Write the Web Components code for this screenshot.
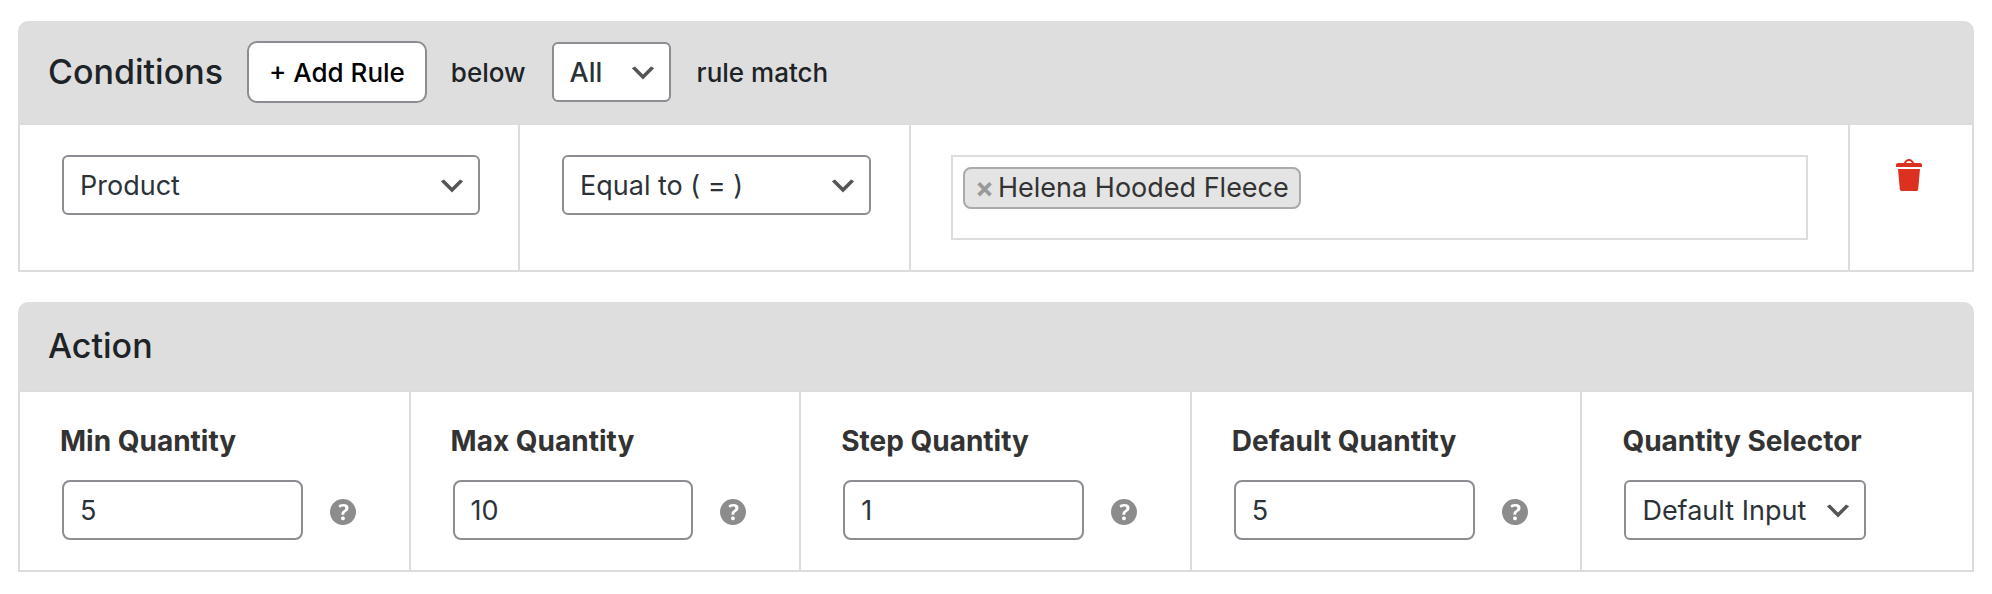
<!DOCTYPE html>
<html lang="en">
<head>
<meta charset="utf-8">
<meta name="viewport" content="width=device-width, initial-scale=1">
<title>Quantity rules</title>
<style>
  body {
    margin: 0;
    padding: 21px 18px;
    background-color: #fff;
    color: #1d2327;
    font-family: Inter, "Liberation Sans", sans-serif;
    font-size: 27px;
  }
</style>
</head>
<body>
<rule-page>
  <rule-panel heading="Conditions" columns="500fr 391fr 939fr 122fr">
    <add-button slot="tools">+ Add Rule</add-button>
    <span slot="tools">below</span>
    <select-field slot="tools" name="Match type" options="All|Any" weight="500"></select-field>
    <span slot="tools">rule match</span>
    <rule-cell><select-field name="Condition" options="Product" wide></select-field></rule-cell>
    <rule-cell><select-field name="Operator" options="Equal to ( = )" wide></select-field></rule-cell>
    <rule-cell><tag-box><tag-item>Helena Hooded Fleece</tag-item></tag-box></rule-cell>
    <rule-cell><trash-button></trash-button></rule-cell>
  </rule-panel>
  <rule-panel heading="Action" columns="repeat(4, 391fr) 390fr">
    <rule-cell><number-field label="Min Quantity" value="5"></number-field></rule-cell>
    <rule-cell><number-field label="Max Quantity" value="10"></number-field></rule-cell>
    <rule-cell><number-field label="Step Quantity" value="1"></number-field></rule-cell>
    <rule-cell><number-field label="Default Quantity" value="5"></number-field></rule-cell>
    <rule-cell><select-field label="Quantity Selector" options="Default Input"></select-field></rule-cell>
  </rule-panel>
</rule-page>

<script>
// small base: every element renders its style and markup into an open root
class BaseElement extends HTMLElement {
  constructor() {
    super();
    this.shadow = this.attachShadow({ mode: "open" });
  }

  connectedCallback() {
    this.renderHTML();
  }

  renderHTML() {
    this.shadow.innerHTML = `
      <style>
        *, :host { box-sizing: border-box; }
        ${this.renderStyle()}
      </style>
      ${this.render()}
    `;
  }
}

// shared by the labelled fields
const labelCSS = `
  label {
    display: block;
    margin-bottom: 20px;
    color: #333;
    font-size: 28px;
    font-weight: 700;
    line-height: 38px;
    white-space: nowrap;
  }
`;

customElements.define("rule-page", class extends BaseElement {
  renderStyle() {
    return `
      :host {
        display: flex;
        flex-direction: column;
        gap: 30px;
      }
    `;
  }

  render() {
    return `<slot></slot>`;
  }
});

customElements.define("rule-panel", class extends BaseElement {
  renderStyle() {
    return `
      :host { display: block; }
      header {
        display: flex;
        align-items: center;
        gap: 24px;
        padding: 20px 30px;
        border-radius: 10px 10px 0 0;
        background-color: #dedede;
        font-size: 26px;
        font-weight: 500;
      }
      h2 {
        margin: 0;
        font-size: 34px;
        font-weight: 500;
        line-height: 48px;
      }
      .row {
        display: grid;
        grid-template-columns: ${this.getAttribute("columns")};
        border: 2px solid #dcdcdc;
      }
      ::slotted(rule-cell:not(:last-child)) {
        border-right: 2px solid #dcdcdc;
      }
    `;
  }

  render() {
    return `
      <header>
        <h2>${this.getAttribute("heading")}</h2>
        <slot name="tools"></slot>
      </header>
      <div class="row"><slot></slot></div>
    `;
  }
});

customElements.define("rule-cell", class extends BaseElement {
  renderStyle() {
    return `
      :host {
        display: block;
        min-width: 0;
        padding: 30px 40px;
      }
    `;
  }

  render() {
    return `<slot></slot>`;
  }
});

customElements.define("add-button", class extends BaseElement {
  renderStyle() {
    return `
      :host { display: block; }
      button {
        display: block;
        height: 62px;
        padding: 0 20px;
        border: 2px solid #8d8c93;
        border-radius: 10px;
        background-color: #fff;
        color: #000;
        font: inherit;
        cursor: pointer;
      }
    `;
  }

  render() {
    return `<button type="button"><slot></slot></button>`;
  }
});

customElements.define("select-field", class extends BaseElement {
  renderStyle() {
    const wide = this.hasAttribute("wide");
    const labelled = this.hasAttribute("label");
    return `
      :host { display: block; }
      ${labelCSS}
      select {
        display: block;
        width: ${wide ? "100%" : labelled ? "78%" : "auto"};
        height: 60px;
        margin: 0 2px;
        padding: 0 48px 0 16px;
        border: 2px solid #8d8c93;
        border-radius: 6px;
        appearance: none;
        background: #fff url('data:image/svg+xml,<svg xmlns="http://www.w3.org/2000/svg" viewBox="0 0 20 20"><path d="M5 6l5 5 5-5 2 1-7 7-7-7 2-1z" fill="%23555"/></svg>') no-repeat right 10px top 55%;
        background-size: 32px 32px;
        color: #2c3338;
        font-family: inherit;
        font-size: 27px;
        font-weight: ${this.getAttribute("weight") || 400};
        cursor: pointer;
      }
    `;
  }

  render() {
    const label = this.getAttribute("label");
    const options = this.getAttribute("options").split("|");
    return `
      ${label ? `<label for="field">${label}</label>` : ""}
      <select id="field" ${label ? "" : `aria-label="${this.getAttribute("name")}"`}>
        ${options.map((option) => `<option>${option}</option>`).join("")}
      </select>
    `;
  }
});

customElements.define("number-field", class extends BaseElement {
  renderStyle() {
    return `
      :host { display: block; }
      ${labelCSS}
      .line {
        display: flex;
        align-items: center;
        gap: 27px;
      }
      input {
        width: 78%;
        height: 60px;
        margin: 0 0 0 2px;
        padding: 0 16px;
        border: 2px solid #8d8c93;
        border-radius: 8px;
        background-color: #fff;
        color: #2c3338;
        font-family: inherit;
        font-size: 27px;
        appearance: textfield;
      }
      svg {
        flex: none;
        width: 26px;
        height: 26px;
        margin-top: 4px;
        fill: #8c8c8c;
      }
    `;
  }

  render() {
    return `
      <label for="field">${this.getAttribute("label")}</label>
      <div class="line">
        <input id="field" type="number" value="${this.getAttribute("value")}">
        <svg viewBox="3 3 14 14" aria-hidden="true"><path d="M17 10c0-3.87-3.14-7-7-7-3.87 0-7 3.13-7 7s3.13 7 7 7c3.86 0 7-3.13 7-7zm-6.3 1.48H9.14v-.43c0-.38.08-.7.24-.98s.46-.57.88-.89c.41-.29.68-.53.81-.71.14-.18.2-.39.2-.62 0-.25-.09-.44-.28-.58-.19-.13-.45-.19-.79-.19-.58 0-1.25.19-2 .57l-.64-1.28c.87-.49 1.8-.74 2.77-.74.81 0 1.45.2 1.92.58.48.39.71.91.71 1.55 0 .43-.09.8-.29 1.11-.19.32-.57.67-1.11 1.06-.38.28-.61.49-.71.63-.1.15-.15.34-.15.57v.35zm-1.47 2.74c-.18-.17-.27-.42-.27-.73 0-.33.08-.58.26-.75s.43-.25.77-.25c.32 0 .57.09.75.26s.27.42.27.74c0 .3-.09.55-.27.72-.18.18-.43.27-.75.27-.33 0-.58-.09-.76-.26z"/></svg>
      </div>
    `;
  }
});

customElements.define("tag-box", class extends BaseElement {
  renderStyle() {
    return `
      :host {
        display: flex;
        flex-wrap: wrap;
        align-items: flex-start;
        gap: 10px;
        min-height: 85px;
        padding: 10px;
        border: 2px solid #ddd;
      }
    `;
  }

  render() {
    return `<slot></slot>`;
  }
});

customElements.define("tag-item", class extends BaseElement {
  renderStyle() {
    return `
      :host {
        display: flex;
        align-items: center;
        gap: 4px;
        padding: 0 10px;
        border: 2px solid #aaa;
        border-radius: 8px;
        background-color: #e4e4e4;
        color: #333;
        line-height: 38px;
      }
      button {
        padding: 0;
        border: 0;
        background: none;
        color: #999;
        font: inherit;
        font-size: 28px;
        font-weight: 700;
        cursor: pointer;
      }
    `;
  }

  render() {
    return `<button type="button" aria-label="Remove">×</button><slot></slot>`;
  }
});

customElements.define("trash-button", class extends BaseElement {
  renderStyle() {
    return `
      :host { display: block; }
      button {
        display: block;
        padding: 0;
        border: 0;
        background: none;
        cursor: pointer;
      }
      svg {
        display: block;
        width: 40px;
        height: 40px;
        fill: #dc3020;
      }
    `;
  }

  render() {
    return `
      <button type="button" aria-label="Delete rule">
        <svg viewBox="0 0 20 20"><path d="M12 4h3c.6 0 1 .4 1 1v1H3V5c0-.6.5-1 1-1h3c.2-1.1 1.3-2 2.5-2s2.3.9 2.5 2zM8 4h3c-.2-.6-.9-1-1.5-1S8.2 3.4 8 4zM4 7h11l-.9 10.1c0 .5-.5.9-1 .9H5.9c-.5 0-.9-.4-1-.9L4 7z"/></svg>
      </button>
    `;
  }
});
</script>
</body>
</html>
